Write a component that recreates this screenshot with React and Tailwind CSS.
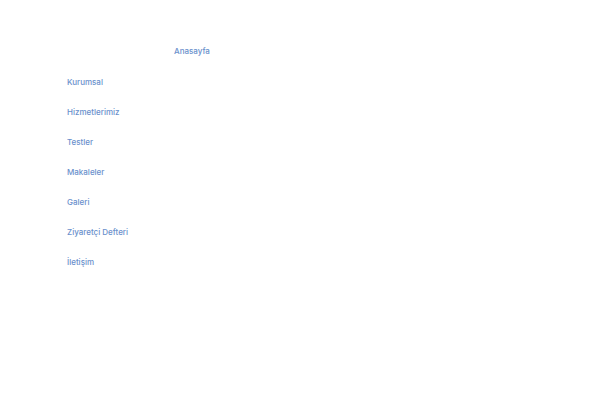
const pages = ["Kurumsal", "Hizmetlerimiz", "Testler", "Makaleler", "Galeri", "Ziyaretçi Defteri", "İletişim"];

function NavLink({ children }) {
  return (
    <a href="#" className="block w-fit text-[8px] leading-[30px] font-medium text-[#6a90cc]">
      {children}
    </a>
  );
}

export default function App() {
  return (
    <div className="min-h-screen bg-white px-[67px] pt-9 font-['Inter',sans-serif]">
      <nav aria-label="Menü">
        <ul>
          <li className="mb-px pl-[107px]">
            <NavLink>Anasayfa</NavLink>
          </li>
          {pages.map((page) => (
            <li key={page}>
              <NavLink>{page}</NavLink>
            </li>
          ))}
        </ul>
      </nav>
    </div>
  );
}
